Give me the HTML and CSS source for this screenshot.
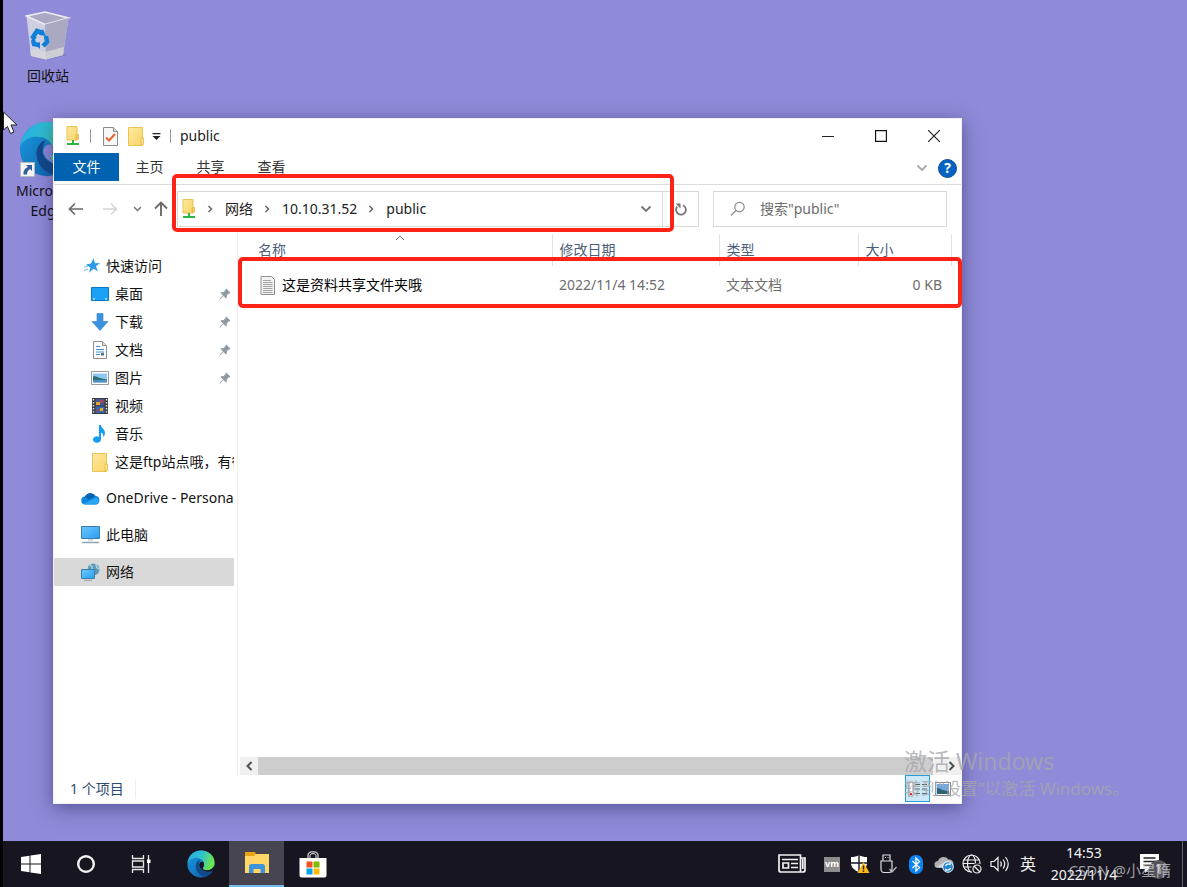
FILE: index.html
```html
<!DOCTYPE html>
<html lang="zh-CN">
<head>
<meta charset="utf-8">
<title>public</title>
<link rel="stylesheet" href="styles.css">
</head>
<body>
<svg class="defs" aria-hidden="true">
  <defs>
    <linearGradient id="edge-blue" x1="0" y1="0" x2="1" y2="1"><stop offset="0" stop-color="#1b9de2"/><stop offset="1" stop-color="#0c59a4"/></linearGradient>
    <linearGradient id="edge-green" x1="0" y1="0" x2="1" y2="0.3"><stop offset="0" stop-color="#27a9e8"/><stop offset="0.55" stop-color="#2fc3cf"/><stop offset="1" stop-color="#6be34f"/></linearGradient>
    <linearGradient id="yellow" x1="0" y1="0" x2="1" y2="1"><stop offset="0" stop-color="#ffe9a0"/><stop offset="1" stop-color="#f8d468"/></linearGradient>
    <linearGradient id="screen" x1="0" y1="0" x2="1" y2="1"><stop offset="0" stop-color="#6cc8ff"/><stop offset="1" stop-color="#2a9df0"/></linearGradient>
    <symbol id="edge" viewBox="0 0 32 32">
      <circle cx="16" cy="16" r="15.5" fill="url(#edge-blue)"/>
      <path d="M0.5 15C2 5 9 0.5 16 0.5c9.500 0 15.500 6.500 15.500 14 0 5-3.500 8.500-8.500 8.500-4 0-5.500-1.500-5-2.500 1.500-1.500 2-3 1.500-5C18.500 11 14 8.500 9 9 5 9.300 2 11.500 0.500 15z" fill="url(#edge-green)"/>
      <path d="M15 11c-3 1-5.500 4.500-5 9 .6 5.500 5.500 10.500 11 10.500 4-1.400 6.500-4 8-7-2 1.200-4.500 1.700-7 1.500-5-.5-9.300-4.500-8.500-9 .3-2 1-3.700 1.500-5z" fill="#114a8b"/>
      <path d="M18.500 13.500c1.500 2.500 1 5-.5 7-.8 1.500 1.500 2.500 5 2.500 4 0 6.500-2 8-4.500l1 3.500-3 2c-6 2.500-14-.5-15-6-.4-2.500 1.500-5 4.500-4.500z" fill="var(--edge-cut)"/>
    </symbol>
    <symbol id="net-folder" viewBox="0 0 14 20">
      <path d="M1 .5h10v13.500H1z" fill="url(#yellow)" stroke="#eac352"/>
      <path d="M10 8.500h2.500V13l-2.500 1z" fill="#f3cb54" stroke="#dfb53f" stroke-width=".7"/>
      <path d="M6 14h2v3h5v2H1v-2h5z" fill="#2fb344"/>
    </symbol>
    <symbol id="folder" viewBox="0 0 16 19">
      <path d="M.5.500h14v18H.500z" fill="url(#yellow)" stroke="#eac352"/>
      <path d="M13 11h2.500v6.500L13 18.500z" fill="#fbe18a" stroke="#dfb53f" stroke-width=".7"/>
    </symbol>
    <symbol id="pin" viewBox="0 0 12 12">
      <path d="M7.300.5l4.200 4.200-.8.800-.8-.2-2.200 2.200.2 2-.9.900-2.400-2.400L1 11.500H.500V11L4 7.400 1.600 5l.9-.9 2 .2 2.200-2.200-.2-.8z" fill="#8d99a3"/>
    </symbol>
    <symbol id="chev-r" viewBox="0 0 6 8"><path d="M1.500 1l3 3-3 3" fill="none" stroke="#666" stroke-width="1.500"/></symbol>
    <symbol id="chev-d" viewBox="0 0 12 8"><path d="M1.500 1.500L6 6l4.500-4.500" fill="none" stroke="currentColor" stroke-width="1.900"/></symbol>
  </defs>
</svg>

<main class="desktop">
  <a class="shortcut bin" href="#">
    <svg width="46" height="50" viewBox="0 0 46 50">
      <path d="M6 45l16 4 20-5-8-3z" fill="#6d6a9d" opacity=".45"/>
      <path d="M1.500 5L20 1l23.500 6-5.500 37-17 4.500L6 45z" fill="#cfcfe2"/>
      <path d="M1.500 5L20 13.500 43.500 7 20 1z" fill="#aaa9c4" stroke="#ececf5" stroke-width="1.500"/>
      <path d="M20 13.500L43.500 7 38 44l-17 4.500z" fill="#a9aac2"/>
      <path d="M5 38l15 3 19-5-1 8-17 4.500L6 45z" fill="#d8dadc" opacity=".75"/>
      <g fill="none" stroke="#0f7fd9" stroke-width="4.500"><path d="M8 26l4-6 6 2M21 25l1 6-4 4M14 34l-5-1-1-4"/></g>
      <path d="M18 18l3 7-7-1zM15 31v7l-4-4zM5 25l7 1-4 5z" fill="#0f7fd9"/>
    </svg>
    <span>回收站</span>
  </a>
  <a class="shortcut edge" href="#">
    <span class="edge-art">
      <svg class="edge-logo" width="56" height="56"><use href="#edge"/></svg>
      <svg class="arrow" width="15" height="15" viewBox="0 0 15 15"><path d="M.500.500h14v14H.500z" fill="#f4f4f4" stroke="#bbb"/><path d="M6 3h6v6l-2-2c-2 1-3 3-3 5.500H3.500C3 9 4.500 6.500 8 5z" fill="#2e5f9f"/></svg>
    </span>
    <span>Microsoft<br>Edge</span>
  </a>

  <section class="window" aria-label="public">
    <header class="titlebar">
      <svg width="14" height="20"><use href="#net-folder"/></svg>
      <i class="bar"></i>
      <button class="plain" aria-label="属性"><svg width="15" height="19" viewBox="0 0 15 19"><path d="M.500.500h10l4 4v14H.500z" fill="#f7f7f7" stroke="#8c8c8c"/><path d="M10.500.500v4h4" fill="#ddd" stroke="#8c8c8c"/><path d="M3 10.500l3 3 6-6.500" fill="none" stroke="#e8622c" stroke-width="2"/></svg></button>
      <button class="plain new" aria-label="新建文件夹"><svg width="16" height="19"><use href="#folder"/></svg></button>
      <button class="plain" aria-label="自定义"><svg width="9" height="7" viewBox="0 0 9 7"><path d="M.5 0h8v1.200h-8zM.500 3h8l-4 4z" fill="#222"/></svg></button>
      <i class="bar near"></i>
      <h1>public</h1>
      <div class="controls">
        <button aria-label="最小化"><svg width="12" height="12" viewBox="0 0 12 12"><path d="M0 6.500h12" stroke="#222"/></svg></button>
        <button aria-label="最大化"><svg width="12" height="12" viewBox="0 0 12 12"><path d="M.500.500h11v11H.500z" fill="none" stroke="#111" stroke-width="1.300"/></svg></button>
        <button aria-label="关闭"><svg width="12" height="12" viewBox="0 0 12 12"><path d="M0 0l12 12M12 0L0 12" stroke="#222" stroke-width="1.200"/></svg></button>
      </div>
    </header>

    <nav class="tabs">
      <button class="file">文件</button>
      <button>主页</button>
      <button>共享</button>
      <button>查看</button>
      <div class="tab-tools">
        <button class="plain pale" aria-label="展开功能区"><svg width="12" height="8"><use href="#chev-d"/></svg></button>
        <button class="help" aria-label="帮助">?</button>
      </div>
    </nav>

    <div class="navbar">
      <div class="history">
        <button class="plain" aria-label="后退"><svg width="16" height="14" viewBox="0 0 16 14"><path d="M15 7H1.500M7 1.500L1.500 7 7 12.500" fill="none" stroke="#6a6a6a" stroke-width="1.700"/></svg></button>
        <button class="plain" aria-label="前进"><svg width="16" height="14" viewBox="0 0 16 14"><path d="M1 7h13.500M9 1.500L14.500 7 9 12.500" fill="none" stroke="#d5d5d5" stroke-width="1.500"/></svg></button>
        <button class="plain grey recent" aria-label="最近"><svg width="9" height="6"><use href="#chev-d"/></svg></button>
        <button class="plain" aria-label="向上"><svg width="14" height="16" viewBox="0 0 14 16"><path d="M7 15V2M1 7.500L7 1.500l6 6" fill="none" stroke="#6a6a6a" stroke-width="1.900"/></svg></button>
      </div>
      <div class="address">
        <div class="path">
          <svg width="14" height="20"><use href="#net-folder"/></svg>
          <svg class="sep" width="6" height="8"><use href="#chev-r"/></svg>
          <a href="#">网络</a>
          <svg class="sep" width="6" height="8"><use href="#chev-r"/></svg>
          <a href="#">10.10.31.52</a>
          <svg class="sep" width="6" height="8"><use href="#chev-r"/></svg>
          <a href="#">public</a>
          <button class="plain grey drop" aria-label="历史"><svg width="12" height="8"><use href="#chev-d"/></svg></button>
        </div>
        <button class="refresh" aria-label="刷新"><svg width="13" height="14" viewBox="0 0 13 14"><path d="M9 3.300A4.900 4.900 0 1 1 3.200 4.600" fill="none" stroke="#777" stroke-width="1.800"/><path d="M1.500 1.500h5v5z" fill="#777"/></svg></button>
      </div>
      <label class="search">
        <svg width="16" height="16" viewBox="0 0 16 16"><circle cx="9.500" cy="6" r="4.700" fill="none" stroke="#8b8b8b" stroke-width="1.200"/><path d="M6 9.500L1 14.500" stroke="#8b8b8b" stroke-width="1.300"/></svg>
        <input type="text" aria-label="搜索" placeholder='搜索"public"'>
      </label>
    </div>

    <div class="body">
      <aside class="tree">
        <a class="root" href="#"><svg width="16" height="16" viewBox="0 0 16 16"><path d="M9.500.500l1.500 4.800 5-.3-4 3.200 1.800 5.300-4.300-2.800-4.500 4 1.500-5L2 6.500l5-1z" fill="#2b9be8"/><path d="M0 9l4-.8M0 12.500l4-1.500" stroke="#7cc0f0" stroke-width="1.200"/></svg>快速访问</a>
        <a href="#"><svg width="18" height="18" viewBox="0 0 18 18"><path d="M.500 2.500h17v13H.500z" fill="#1ba1f5" stroke="#0877c4"/><path d="M2 14h2M14 14h2" stroke="#fff"/></svg><span>桌面</span><svg class="pin" width="12" height="12"><use href="#pin"/></svg></a>
        <a href="#"><svg width="18" height="18" viewBox="0 0 18 18"><path d="M6 .5h6v8h5L9 17.500 1 8.500h5z" fill="#3a93e0" stroke="#2d7fca" stroke-width=".6"/></svg><span>下载</span><svg class="pin" width="12" height="12"><use href="#pin"/></svg></a>
        <a href="#"><svg width="18" height="18" viewBox="0 0 18 18"><path d="M2.500.500h9l4 4v13h-13z" fill="#fafafa" stroke="#8e8e8e"/><path d="M11.500.500v4h4" fill="#ddd" stroke="#8e8e8e"/><path d="M5 5.500h4M5 8.500h8M5 11h8M5 13.500h4" stroke="#3b8fd0" stroke-width="1.200"/><path d="M10 12h3v2.500h-3z" fill="#4a7a85"/></svg><span>文档</span><svg class="pin" width="12" height="12"><use href="#pin"/></svg></a>
        <a href="#"><svg width="18" height="18" viewBox="0 0 18 18"><path d="M.500 2.500h17v13H.500z" fill="#fff" stroke="#999"/><path d="M2 4.500h14v9H2z" fill="#8dc8f2"/><path d="M2 7.500c4-1 5 2 14 3v1H2z" fill="#2e6f78"/><path d="M2 11.500c5-1 9 0 14-.5v2.500H2z" fill="#4c8fc4"/></svg><span>图片</span><svg class="pin" width="12" height="12"><use href="#pin"/></svg></a>
        <a href="#"><svg width="18" height="18" viewBox="0 0 18 18"><path d="M1 1h16v16H1z" fill="#3a3a3a"/><path d="M2.500 2v14M15.500 2v14" stroke="#ddd" stroke-width="1.500" stroke-dasharray="1.500 1.500"/><path d="M4.500 2h9v6.500h-9z" fill="#45569a"/><path d="M4.500 9.500h9V16h-9z" fill="#3368b0"/><path d="M5 5h4v3H5zM9 11h3v3H9z" fill="#e6a92f"/><path d="M9 3h3v3H9zM6 12h2v3H6z" fill="#b14545"/></svg><span>视频</span></a>
        <a href="#"><svg width="18" height="18" viewBox="0 0 18 18"><path d="M8 0h2c0 3 4 4 4 8 0 2-1 3-2 4 .5-3-.5-4-2-4.500V14.500a4 3.300 0 1 1-2-2.800z" fill="#159df2"/></svg><span>音乐</span></a>
        <a href="#"><svg width="18" height="19"><use href="#folder"/></svg><span>这是ftp站点哦，有很多资料</span></a>
        <a class="root" href="#"><svg width="19" height="13" viewBox="0 0 19 13"><path d="M4.500 12.500a4 4 0 0 1-.5-8A6 6 0 0 1 14.500 4a4.300 4.300 0 0 1 .5 8.500z" fill="#1185dd"/><path d="M4 4.500A6 6 0 0 1 14.500 4L8 7.500z" fill="#0862b5"/><path d="M2 12l12.500-6c4 0 4.500 5 1 6.500h-11z" fill="#2aa5f2"/></svg><span>OneDrive - Personal</span></a>
        <a class="root" href="#"><svg width="19" height="18" viewBox="0 0 19 18"><path d="M.500.500h18v12H.500z" fill="url(#screen)" stroke="#3d7ba8"/><path d="M7 13h5v2H7z" fill="#d5dde3"/><path d="M1 16.500h17" stroke="#8fa3b0" stroke-width="1.500"/></svg><span>此电脑</span></a>
        <a class="root selected" href="#"><svg width="19" height="18" viewBox="0 0 19 18"><circle cx="12.500" cy="6.500" r="6" fill="#5c9ab8"/><path d="M9 2c2 1 3 4 2 6M15 1c0 3 1 4 3 5" stroke="#a9d5e8" stroke-width="1.500" fill="none"/><path d="M.500 6.500h13v9H.500z" fill="url(#screen)" stroke="#3d7ba8"/><path d="M3 17.300h8" stroke="#8fa3b0"/></svg><span>网络</span></a>
      </aside>

      <div class="files">
        <div class="listing">
          <table>
            <colgroup><col><col class="c-date"><col class="c-type"><col class="c-size"><col class="c-end"></colgroup>
            <thead>
              <tr><th>名称<svg class="sort" width="10" height="6" viewBox="0 0 10 6"><path d="M1 5l4-4 4 4" fill="none" stroke="#777"/></svg></th><th>修改日期</th><th>类型</th><th>大小</th><td></td></tr>
            </thead>
            <tbody>
              <tr>
                <td><span class="name"><svg width="16" height="19" viewBox="0 0 16 19"><path d="M1 .5h10.500l3 3v15H1z" fill="#f3f3f3" stroke="#8e8e8e"/><path d="M3 4.500h8M3 6.500h9.500M3 8.500h9.500M3 10.500h9.500M3 12.500h9.500M3 14.500h9.500M3 16.500h9.500" stroke="#a3a3a3"/></svg>这是资料共享文件夹哦</span></td>
                <td>2022/11/4 14:52</td><td>文本文档</td><td class="num">0 KB</td><td></td>
              </tr>
            </tbody>
          </table>
        </div>
        <div class="scroll">
          <button class="plain" aria-label="向左"><svg width="8" height="10" viewBox="0 0 8 10"><path d="M6.500 1l-4 4 4 4" fill="none" stroke="#505050" stroke-width="2"/></svg></button>
          <i></i>
          <button class="plain" aria-label="向右"><svg width="8" height="10" viewBox="0 0 8 10"><path d="M1.500 1l4 4-4 4" fill="none" stroke="#505050" stroke-width="2"/></svg></button>
        </div>
      </div>
    </div>

    <footer class="status">
      <span>1 个项目</span>
      <div class="views">
        <button class="on" aria-label="详细信息"><svg width="20" height="16" viewBox="0 0 20 16"><path d="M1 1h4v14H1z" fill="#fff" stroke="#999"/><path d="M7 3.500h5M14 3.500h5M7 8h5M14 8h5M7 12.500h5M14 12.500h5" stroke="#566"/><path d="M2 12h2v2H2z" fill="#d33"/></svg></button>
        <button aria-label="大图标"><svg width="16" height="14" viewBox="0 0 16 14"><path d="M.500.500h15v13H.500z" fill="#fff" stroke="#888"/><path d="M2 2h12v10H2z" fill="#6fa9e8"/><path d="M2 6c4 0 5 3 12 3v3H2z" fill="#2f6470"/></svg></button>
      </div>
    </footer>
  </section>

  <svg class="cursor" width="15" height="24" viewBox="0 0 15 24"><path d="M.500 1v18l4-3.500 3 7 3.500-1.500-3-7h6z" fill="#fff" stroke="#222"/></svg>
  <div class="activate"><strong>激活 Windows</strong><span>转到“设置”以激活 Windows。</span></div>
</main>

<footer class="taskbar">
  <div class="group">
    <button aria-label="开始"><svg width="20" height="20" viewBox="0 0 20 20"><path d="M0 3l8.500-1.200v7.700H0zM9.500 1.600L20 0v9.500H9.500zM0 10.500h8.500v7.700L0 17zM9.500 10.500H20V20L9.500 18.400z" fill="#fff"/></svg></button>
    <button aria-label="搜索"><svg width="20" height="20" viewBox="0 0 20 20"><circle cx="10" cy="10" r="7.800" fill="none" stroke="#f2f2f2" stroke-width="2.400"/></svg></button>
    <button aria-label="任务视图"><svg width="20" height="18" viewBox="0 0 20 18"><path d="M1.500 0v3.500h11V0M1.500 18v-3.500h11V18M1.500 6h11v6h-11zM17.500 0v18" fill="none" stroke="#e8e8e8" stroke-width="1.300"/><path d="M16 4.500h3.500v3.500H16z" fill="#fff"/></svg></button>
  </div>
  <div class="group apps">
    <button aria-label="Edge"><svg width="28" height="28"><use href="#edge"/></svg></button>
    <button class="active" aria-label="文件资源管理器"><svg width="26" height="22" viewBox="0 0 26 22"><path d="M1 0h10l1.500 3H25v18H1z" fill="#e8a317"/><path d="M1 4h9l2-2h13v19H1z" fill="#ffd667"/><path d="M5 21v-6.500c0-1.500 1-2.500 2.500-2.500h11c1.500 0 2.500 1 2.500 2.500V21h-4.500v-4h-7v4z" fill="#3c94dd"/></svg></button>
    <button aria-label="Microsoft Store"><svg width="28" height="28" viewBox="0 0 28 28"><path d="M9 9V5.500C9 .5 19 .5 19 5.500V9" fill="none" stroke="#aaa" stroke-width="1.600"/><path d="M11 8V5.500c0-2.500 6-2.500 6 0V8" fill="none" stroke="#eee"/><path d="M.500 8h27v17.500q0 2-2 2h-23q-2 0-2-2z" fill="#fff"/><path d="M7.500 11.500h6v6h-6z" fill="#f25022"/><path d="M14.500 11.500h6v6h-6z" fill="#7fba00"/><path d="M7.500 18.500h6v6h-6z" fill="#00a4ef"/><path d="M14.500 18.500h6v6h-6z" fill="#ffb900"/></svg></button>
  </div>
  <div class="tray">
    <svg class="news" width="28" height="20" viewBox="0 0 28 20"><path d="M1 1h21.500v17H3q-2 0-2-2zM22.500 4H27v12q0 2-2 2h-2.500M4 5.500h16M13 9.500h7M13 13.500h7M5 9h5.500v5H5zM24.800 5v10" fill="none" stroke="#f2f2f2" stroke-width="1.700"/></svg>
    <span class="vm">vm</span>
    <svg width="20" height="20" viewBox="0 0 20 20"><path d="M9 1c2 1.500 5 2 8 2v6c0 5-4 7.500-8 9-4-1.500-8-4-8-9V3c3 0 6-.5 8-2z" fill="#fff"/><path d="M9 1v17M1 9h16" stroke="#17151f" stroke-width="1.400"/><path d="M13.500 8l6 11H7.500z" fill="#fdb813"/><path d="M13.500 11.500v4M13.500 16.500v1.500" stroke="#222" stroke-width="1.400"/></svg>
    <svg width="18" height="20" viewBox="0 0 18 20"><path d="M4 7V1h7v6M2 7h11v8c0 2-1 3.500-3 3.500H5c-2 0-3-1.500-3-3.500zM6 3.500h1M8.500 3.500h1" fill="none" stroke="#ddd" stroke-width="1.200"/><path d="M10.500 15l2.500 3 4.500-5" fill="none" stroke="#bbb" stroke-width="1.300"/></svg>
    <svg width="14" height="19" viewBox="0 0 14 19"><rect width="14" height="19" rx="6.500" fill="#0a84f5"/><path d="M3.500 6l7 6.500L7 16V3l3.500 3.500-7 6.500" fill="none" stroke="#fff" stroke-width="1.300"/></svg>
    <svg width="20" height="18" viewBox="0 0 20 18"><path d="M4 13a3.500 3.500 0 0 1 0-7 6 6 0 0 1 10.500-1.500A4.500 4.500 0 0 1 17 13z" fill="#aeb0b5"/><path d="M2 12l10-6c4-1 6 2 5 6z" fill="#d0d2d5"/><circle cx="14" cy="12" r="5.300" fill="#2585cf" stroke="#e6f1fa"/><path d="M11.500 11a3 3 0 0 1 4.500-1.500V8M16.500 13a3 3 0 0 1-4.500 1.500V16" fill="none" stroke="#fff" stroke-width="1.200"/></svg>
    <svg width="20" height="20" viewBox="0 0 20 20"><g fill="none" stroke="#eee" stroke-width="1.200"><circle cx="9.500" cy="9.500" r="8.500"/><ellipse cx="9.500" cy="9.500" rx="4" ry="8.500"/><path d="M2 6h15M2 13h9M1 9.500h17"/></g><circle cx="15" cy="15" r="6" fill="#17151f"/><circle cx="15" cy="15" r="4" fill="none" stroke="#eee" stroke-width="1.200"/><path d="M12 12l6 6" stroke="#eee" stroke-width="1.200"/></svg>
    <svg width="20" height="18" viewBox="0 0 20 18"><path d="M1 6.500h3l4-4v13l-4-4H1zM10.500 6.500q1.800 2.500 0 5M13 4.500q3.500 4.500 0 9M15.500 2q5.500 7 0 14" fill="none" stroke="#eee" stroke-width="1.200"/></svg>
    <button class="ime">英</button>
    <div class="clock"><time>14:53</time><span>2022/11/4</span></div>
    <button class="notify" aria-label="通知"><svg width="20" height="20" viewBox="0 0 20 20"><path d="M0 0h19v15H9l-4 4v-4H0z" fill="#fff"/><path d="M3.500 4h12M3.500 7.500h12M3.500 11h12" stroke="#222" stroke-width="1.300"/></svg><b>1</b></button>
  </div>
</footer>
<div class="credit">CSDN @小星隋</div>
</body>
</html>
```
FILE: styles.css
```css
* { box-sizing: border-box; }
body {
  margin: 0;
  height: 100vh;
  display: flex;
  flex-direction: column;
  position: relative;
  overflow: hidden;
  border-left: 3px solid #000;
  background: #8f8bd8;
  color: #111;
  font: 14px/20px "Noto Sans", "Noto Sans CJK SC", sans-serif;
}
button { font: inherit; color: inherit; background: none; border: 0; padding: 0; display: flex; align-items: center; justify-content: center; }
a { color: inherit; text-decoration: none; }
svg { display: block; flex: none; }
.defs { position: absolute; width: 0; height: 0; }
.desktop { flex: 1; position: relative; min-height: 0; }
.grey { color: #777; }
.pale { color: #aaa; }

.shortcut { position: absolute; display: flex; flex-direction: column; align-items: center; text-align: center; width: 90px; }
.bin { left: 0; top: 11px; gap: 5px; }
.edge { left: -1px; top: 121px; gap: 4px; --edge-cut: #8f8bd8; }
.edge-art { position: relative; }
.arrow { position: absolute; left: 1px; bottom: 0; }
.cursor { position: absolute; left: 0; top: 111px; }

.window {
  position: absolute;
  left: 50px; right: 225px; top: 118px; bottom: 37px;
  display: flex;
  flex-direction: column;
  background: #fff;
  border: 1px solid #f0f0f6;
  box-shadow: 0 4px 18px rgba(30, 25, 80, .5);
}
.titlebar { height: 34px; display: flex; align-items: center; padding-left: 12px; }
.bar { width: 1px; height: 14px; background: #999; margin: 0 12px 0 10px; }
.bar.near { margin: 0 9px 0 9px; }
.new { margin: 0 8px 0 10px; }
h1 { margin: 0; font: inherit; color: #222; }
.controls { margin-left: auto; display: flex; align-self: stretch; padding-right: 1px; }
.controls button { width: 53px; }

.tabs { height: 32px; display: flex; align-items: flex-start; border-bottom: 1px solid #dcdcdc; color: #333; }
.tabs > button { width: 61px; height: 28px; }
.tabs > .file { width: 65px; background: #0063b1; color: #fff; }
.tab-tools { margin-left: auto; display: flex; align-items: center; gap: 10px; height: 30px; padding-right: 4px; }
.help { width: 19px; height: 19px; border-radius: 50%; background: #0563c1; border: 1px solid #0b4f94; color: #fff; font-weight: bold; }

.navbar { height: 48px; display: flex; align-items: center; padding: 0 14px; }
.history { display: flex; align-items: center; gap: 18px; width: 109px; }
.recent { margin: 0 -6px 0 -3px; }
.address { position: relative; flex: 1; height: 36px; display: flex; border: 1px solid #d9d9d9; }
.address::after { content: ""; position: absolute; left: -6px; right: 24px; top: -18px; bottom: -6px; border: 4px solid #ff2216; border-radius: 5px; }
.path { flex: 1; display: flex; align-items: center; padding-left: 4px; border-right: 1px solid #d9d9d9; color: #222; }
.path .sep { margin: 0 12px 0 11px; }
.drop { margin-left: auto; margin-right: 10px; }
.refresh { width: 35px; }
.search { width: 234px; height: 36px; margin-left: 14px; display: flex; align-items: center; gap: 14px; padding-left: 16px; border: 1px solid #d9d9d9; }
.search input { flex: 1; min-width: 0; border: 0; padding: 0; outline: 0; background: none; font: inherit; }
.search input::placeholder { color: #6d6d6d; opacity: 1; }

.body { flex: 1; display: flex; min-height: 0; }
.tree { width: 180px; padding-top: 19px; overflow: hidden; }
.tree a { display: flex; align-items: center; gap: 6px; height: 28px; padding-left: 37px; padding-right: 3px; white-space: nowrap; }
.tree a span { flex: 1; }
.tree .root { padding-left: 27px; }
.tree .root:first-child { padding-left: 30px; }
.tree .root + .root { margin-top: 9px; }
.tree a:not(.root) + .root { margin-top: 8px; }
.tree .selected { background: #d9d9d9; }
.files { flex: 1; display: flex; flex-direction: column; margin-left: 3px; padding-top: 1px; border-left: 1px solid #f0f0f0; min-width: 0; }
.listing { position: relative; }
.listing::after { content: ""; position: absolute; left: 0; right: -1px; top: 23px; bottom: -4px; border: 4px solid #ff2216; border-radius: 5px; }
table { width: 100%; table-layout: fixed; border-collapse: collapse; }
.c-date { width: 167px; }
.c-type { width: 139px; }
.c-size { width: 93px; }
.c-end { width: 10px; }
th { position: relative; height: 32px; padding: 0 0 0 7px; text-align: left; font-weight: normal; color: #4c607a; border-right: 1px solid #e2e2e2; }
th:first-child { padding-left: 20px; }
.sort { position: absolute; left: 50%; top: 1px; }
thead td, tbody td { padding: 0 0 0 7px; }
tbody tr { height: 38px; color: #6d6d6d; }
tbody .num { text-align: right; padding-right: 9px; }
.name { display: flex; align-items: center; gap: 6px; color: #000; white-space: nowrap; }
tbody td:first-child { padding-left: 22px; }
.scroll { margin-top: auto; height: 18px; margin-left: 2px; display: flex; background: #f0f0f0; }
.scroll button { width: 18px; }
.scroll i { flex: 1; background: #cdcdcd; margin-right: 10px; }

.status { height: 28px; display: flex; align-items: center; justify-content: space-between; color: #2e4a6e; padding-left: 16px; }
.status span { padding-right: 11px; border-right: 1px solid #eee; }
.views { display: flex; align-self: stretch; padding: 0 6px 1px 0; }
.views button { width: 25px; }
.views .on { background: #cce8f6; border: 1px solid #26a0da; }

.activate { position: absolute; left: 901px; top: 746px; display: flex; flex-direction: column; white-space: nowrap; color: rgba(165, 165, 172, .8); font-size: 17px; line-height: 26px; }
.activate strong { font-weight: normal; font-size: 23px; line-height: 30px; }

.taskbar { height: 46px; display: flex; background: #17151f; color: #f4f4f4; }
.group { display: flex; }
.group button { width: 55px; height: 46px; --edge-cut: #17151f; }
.apps { margin-left: 5px; gap: 1px; }
.apps .active { background: #47454f; border-bottom: 2px solid #76b9ed; }
.tray { margin-left: auto; display: flex; align-items: center; border-right: 1px solid #66656d; margin-right: 4px; padding-right: 22px; }
.tray > svg { width: 28px; }
.tray .news { margin-right: 12px; }
.vm { width: 16px; height: 15px; margin: 0 6px; background: #8d8d8d; color: #fff; font-size: 9px; font-weight: bold; line-height: 13px; text-align: center; }
.ime { width: 28px; font-size: 16px; }
.clock { display: flex; flex-direction: column; align-items: center; line-height: 22px; width: 72px; margin: 0 20px 0 6px; }
.notify { position: relative; }
.notify b { position: absolute; left: 9px; top: 6px; width: 19px; height: 19px; border-radius: 50%; background: #55545c; font-size: 12px; line-height: 18px; font-weight: normal; }
.credit { position: absolute; right: 16px; bottom: 7px; color: rgba(205, 205, 210, .75); font-size: 15px; }
```
